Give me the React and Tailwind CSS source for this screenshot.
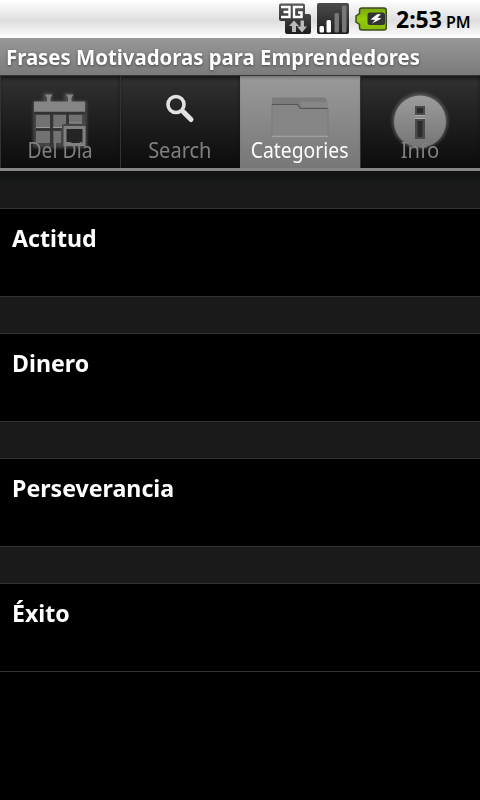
const categories = ['Actitud', 'Dinero', 'Perseverancia', 'Éxito'];

const NetworkIcon = () => (
  <svg width="32" height="32" viewBox="0 0 32 32">
    <defs>
      <linearGradient id="net" x1="0" y1="0" x2="0" y2="1">
        <stop offset="0" stopColor="#5a5a5a" />
        <stop offset="1" stopColor="#1c1c1c" />
      </linearGradient>
    </defs>
    <path d="M2 0.5H24Q26 0.5 26 2.5V11H30Q32 11 32 13V29Q32 31 30 31H8Q6 31 6 29V18H2Q0 18 0 16V2.5Q0 0.5 2 0.5Z" fill="url(#net)" />
    <path d="M2 4H10.500V14H2M4.500 9H10.500M24 4H15V14H22.500V9.500H19" fill="none" stroke="#fff" strokeWidth="2.400" />
    <path d="M15 17.500L20 23H17V29H13V23H10Z" fill="#b9b9b9" />
    <path d="M21.500 17.500H25V23.500H28L23 29.500L18 23.500H21.500Z" fill="#b9b9b9" />
  </svg>
);

const SignalIcon = () => (
  <svg width="32" height="32" viewBox="0 0 32 32">
    <defs>
      <linearGradient id="sig" x1="0" y1="0" x2="0" y2="1">
        <stop offset="0" stopColor="#4c4c4c" />
        <stop offset="1" stopColor="#1e1e1e" />
      </linearGradient>
    </defs>
    <rect x="0" y="0" width="32" height="31" rx="2" fill="url(#sig)" />
    <rect x="2.500" y="23" width="4.500" height="6.500" rx="1.500" fill="#fff" />
    <rect x="9.500" y="17" width="4.500" height="12.500" rx="1.500" fill="#fff" />
    <rect x="17.500" y="10" width="4.500" height="19.500" rx="1.500" fill="#777" />
    <rect x="25" y="2.500" width="4.500" height="27" rx="1.500" fill="#777" />
  </svg>
);

const BatteryIcon = () => (
  <svg width="32" height="24" viewBox="0 0 32 24">
    <defs>
      <linearGradient id="bat" x1="0" y1="0" x2="0" y2="1">
        <stop offset="0" stopColor="#7aa80e" />
        <stop offset="0.5" stopColor="#93cc08" />
        <stop offset="1" stopColor="#86bb0a" />
      </linearGradient>
    </defs>
    <path d="M7 1H29Q31.300 1 31.300 3.300V20.700Q31.300 23 29 23H7Q4.500 23 4.500 20.500V17.500L1 15V9L4.500 6.500V3.500Q4.500 1 7 1Z" fill="url(#bat)" stroke="#3d4a20" strokeWidth="1.500" />
    <path d="M15 5.500H27.500Q30 5.500 30 8V15.500Q30 18 27.500 18H15Q12.500 18 12.500 15.500V8Q12.500 5.500 15 5.500Z" fill="#333" />
    <path d="M22.500 7L15.500 12.500L20 13L17 16.500L26.500 11.500L22.500 10.500L26 7.500Z" fill="#fff" />
  </svg>
);

const CalendarIcon = () => (
  <svg width="64" height="64" viewBox="0 0 64 64">
    <defs>
      <filter id="glow" x="-20%" y="-20%" width="140%" height="140%">
        <feGaussianBlur stdDeviation="1.5" />
      </filter>
    </defs>
    <path d="M5 13H59V60H5ZM15 5H24V13H15ZM36 5H45V13H36Z" fill="#555" opacity="0.75" filter="url(#glow)" />
    <path d="M17 6.500H24.500L22.500 10V14H19V10Z M38 6.500H45.500L43.500 10V14H40V10Z" fill="#858585" />
    <rect x="6" y="13.500" width="51" height="11" fill="#858585" />
    <path d="M6 25H57M23.500 25V58M39.500 25V40M8 41.500H33" stroke="#333" strokeWidth="2.500" />
    <path d="M8 27H22V39.500H8ZM25.500 27H38V39.500H25.500ZM41 27H54V35H41ZM8 43H22V55H8ZM25.500 43H33V55H25.500Z" fill="#727272" />
    <path d="M8 39.500H22M25 39.500H37M41 35H54" stroke="#999" strokeWidth="1" />
    <rect x="34" y="36" width="24" height="23" rx="2" fill="#444" />
    <rect x="37" y="39.500" width="19" height="17" fill="#242424" stroke="#808080" strokeWidth="3" />
  </svg>
);

const SearchIcon = () => (
  <svg className="mt-[5px]" width="32" height="32" viewBox="0 0 32 32" fill="none">
    <circle cx="12" cy="11.500" r="8" stroke="#e2e2e2" strokeWidth="3.600" />
    <path d="M19.500 19L27 26.500" stroke="#e2e2e2" strokeWidth="5" strokeLinecap="round" />
  </svg>
);

const FolderIcon = () => (
  <svg width="64" height="64" viewBox="0 0 64 64">
    <path d="M5 9.500H57L59 12V20H31L29 16H4V11Z" fill="#7b7b7b" />
    <path d="M32 14H60V19H33Z" fill="#878787" />
    <path d="M4 16.500H29.500L32.500 20.500H60V49H4Z" fill="#868686" stroke="#7a7a7a" strokeWidth="1" />
    <path d="M4 16.500H29.500L32.500 20.500H60" fill="none" stroke="#565656" strokeWidth="1.200" />
    <path d="M4 48.500H60" stroke="#a0a0a0" strokeWidth="1.500" />
  </svg>
);

const InfoIcon = () => (
  <svg width="64" height="64" viewBox="0 0 64 64">
    <defs>
      <linearGradient id="inf" x1="0" y1="0" x2="0" y2="1">
        <stop offset="0" stopColor="#9c9c9c" />
        <stop offset="1" stopColor="#757575" />
      </linearGradient>
    </defs>
    <circle cx="32" cy="33" r="28" fill="#666" opacity="0.7" filter="url(#glow)" />
    <circle cx="32" cy="33.500" r="26" fill="url(#inf)" />
    <rect x="27" y="18" width="10" height="9" fill="#4a4a4a" />
    <rect x="29" y="20" width="6" height="5" fill="#2b2b2b" />
    <rect x="27" y="31" width="10" height="20" fill="#4a4a4a" />
    <rect x="29.500" y="33" width="5" height="16" fill="#2b2b2b" />
    <path d="M27 27.500H37M27 30.500H37" stroke="#aaa" strokeWidth="1" />
  </svg>
);

const tabs = [
  { label: 'Del Día', icon: <CalendarIcon />, fit: 'scale-x-[0.88]' },
  { label: 'Search', icon: <SearchIcon />, fit: 'scale-x-[0.91]' },
  { label: 'Categories', icon: <FolderIcon />, fit: 'scale-x-[0.88]', active: true },
  { label: 'Info', icon: <InfoIcon />, fit: 'scale-x-[0.92]' },
];

const StatusBar = () => (
  <div className="flex h-[38px] items-start bg-linear-to-b from-white from-0% via-[#dedede] via-55% to-white pl-[279px]">
    <div className="mt-[3px] mr-1.5 shrink-0"><NetworkIcon /></div>
    <div className="mt-[3px] mr-1.5 shrink-0"><SignalIcon /></div>
    <div className="mt-[7px] mr-[9px] shrink-0"><BatteryIcon /></div>
    <div className="mt-[3px] flex items-baseline gap-1 whitespace-nowrap font-bold leading-8 text-black">
      <span className="text-[23px]">2:53</span>
      <span className="text-base font-semibold">PM</span>
    </div>
  </div>
);

const Tab = ({ label, icon, fit, active }) => (
  <div
    className={`flex h-[92px] flex-1 flex-col items-center ${
      active
        ? 'bg-linear-to-b from-[#9a9a9a] to-[#777] shadow-[inset_0_3px_3px_-1px_#777]'
        : 'bg-linear-to-b from-[#323232] to-[#0c0c0c] shadow-[inset_1px_0_0_#333,inset_0_3px_4px_-1px_#111]'
    }`}
  >
    <div className="mt-3 flex h-16 shrink-0 items-start justify-center">{icon}</div>
    <span
      className={`-mt-[17px] whitespace-nowrap text-[22px] leading-7 ${fit} ${
        active ? 'text-white' : 'text-[#808080]'
      }`}
    >
      {label}
    </span>
  </div>
);

const App = () => {
  return (
    <div className="h-[800px] w-[480px] overflow-hidden bg-black font-['Noto_Sans',sans-serif]">
      <StatusBar />
      <div className="flex h-[38px] items-center border-b border-[#333] bg-linear-to-b from-[#989898] to-[#7b7b7b] pl-1.5">
        <h1 className="origin-left scale-x-[0.97] whitespace-nowrap text-[21px] leading-7 font-bold text-white text-shadow-[0_1px_3px_#444]">
          Frases Motivadoras para Emprendedores
        </h1>
      </div>
      <div className="flex">
        {tabs.map((tab) => (
          <Tab key={tab.label} {...tab} />
        ))}
      </div>
      <div className="h-[3px] bg-[#858585]" />
      <div className="h-[37px] bg-linear-to-b from-[#0f1211] to-[#1a1a1a] to-40%" />
      <div className="flex flex-col gap-9 bg-[#1a1a1a]">
        {categories.map((name) => (
          <div key={name} className="h-[89px] border-y border-[#333] bg-black px-3 pt-[13px]">
            <span className="inline-block origin-left scale-x-[0.965] whitespace-nowrap text-2xl font-bold text-white">{name}</span>
          </div>
        ))}
      </div>
    </div>
  );
};

export default App;
